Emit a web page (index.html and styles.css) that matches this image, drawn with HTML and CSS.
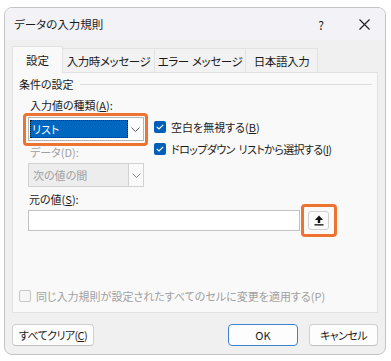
FILE: index.html
```html
<!DOCTYPE html>
<html lang="ja">
<head>
<meta charset="utf-8">
<title>データの入力規則</title>
<link rel="stylesheet" href="styles.css">
</head>
<body>
<div class="window">
  <div class="titlebar">
    <span class="title">データの入力規則</span>
    <span class="help">?</span>
    <span class="close"><svg width="11" height="11" viewBox="0 0 11 11"><path d="M0.5 0.5 L10.5 10.5 M10.5 0.5 L0.5 10.5" stroke="#1b1b1b" stroke-width="1.1" fill="none"/></svg></span>
  </div>
  <div class="body">
    <div class="tabs">
      <div class="tab active t1">設定</div>
      <div class="tab t2">入力時メッセージ</div>
      <div class="tab t3">エラー メッセージ</div>
      <div class="tab t4">日本語入力</div>
    </div>
    <div class="panel">
      <div class="legend"><span>条件の設定</span><span class="rule"></span></div>
      <div class="form">
        <div class="lbl l1">入力値の種類(<u>A</u>):</div>
        <div class="hl combo-wrap">
          <div class="combo">
            <span class="value"><span class="sel">リスト</span></span>
            <span class="drop"><svg width="9" height="5" viewBox="0 0 9 5"><polyline points="0.5,0.5 4.5,4.5 8.5,0.5" fill="none" stroke="#5a5a5a" stroke-width="1"/></svg></span>
          </div>
        </div>
        <div class="checks">
          <div class="check"><span class="box on"><svg width="8" height="6" viewBox="0 0 8 6"><polyline points="0.8,3 3,5 7.2,0.8" fill="none" stroke="#fff" stroke-width="1.2"/></svg></span><span>空白を無視する(<u>B</u>)</span></div>
          <div class="check"><span class="box on"><svg width="8" height="6" viewBox="0 0 8 6"><polyline points="0.8,3 3,5 7.2,0.8" fill="none" stroke="#fff" stroke-width="1.2"/></svg></span><span class="kana">ドロップダウン リストから選択する(<u>I</u>)</span></div>
        </div>
        <div class="lbl l2 disabled">データ(D):</div>
        <div class="combo c2 disabled">
          <span class="value">次の値の間</span>
          <span class="drop"><svg width="9" height="5" viewBox="0 0 9 5"><polyline points="0.5,0.5 4.5,4.5 8.5,0.5" fill="none" stroke="#8a8a8a" stroke-width="1"/></svg></span>
        </div>
      </div>
      <div class="lbl src">元の値(<u>S</u>):</div>
      <div class="src-row">
        <div class="input"></div>
        <div class="hl btn-wrap">
          <div class="ref"><svg width="10" height="11" viewBox="0 0 10 11"><path d="M5 0.5 L9 5 H6.2 V8 H3.8 V5 H1 Z" fill="#111"/><rect x="0.5" y="9.2" width="9" height="1.3" fill="#111"/></svg></div>
        </div>
      </div>
      <div class="apply"><span class="box off"></span><span>同じ入力規則が設定されたすべてのセルに変更を適用する(P)</span></div>
    </div>
    <div class="buttons">
      <div class="btn clear"><span class="kana">すべてクリア(<u>C</u>)</span></div>
      <div class="btn ok">OK</div>
      <div class="btn cancel"><span class="kana">キャンセル</span></div>
    </div>
  </div>
</div>
</body>
</html>
```
FILE: styles.css
```css
* { box-sizing: border-box; }
html, body { margin: 0; padding: 0; background: #ffffff; }
body {
  font-family: "Noto Sans CJK JP", "Noto Sans", sans-serif;
  font-feature-settings: "palt";
  font-size: 11px;
  color: #1b1b1b;
  white-space: nowrap;
}
u { text-decoration-thickness: 1px; text-underline-offset: 1px; }
.kana { letter-spacing: -0.6px; word-spacing: 2px; }

.window {
  margin: 7px 0 0 4px;
  width: 382px;
  height: 348px;
  border: 1px solid #c4c4c4;
  border-radius: 8px;
  background: #f0f0f0;
  overflow: hidden;
  display: flex;
  flex-direction: column;
}

.titlebar {
  height: 32px;
  flex: none;
  background: #f3f3f7;
  display: flex;
  align-items: center;
  padding: 0 3px 0 9px;
}
.title { font-size: 11.5px; }
.help { margin-left: auto; width: 20px; text-align: center; font-size: 12px; }
.close { width: 36px; margin-left: 15px; display: flex; justify-content: center; }

.body { padding: 6px 7px 0 7px; display: flex; flex-direction: column; }

.tabs { display: flex; align-items: flex-end; height: 26px; font-size: 11.5px; }
.tab {
  height: 24px;
  border: 1px solid #e2e2e2;
  border-bottom: none;
  border-left: none;
  background: #f2f2f2;
  display: flex;
  align-items: center;
  justify-content: center;
  letter-spacing: -0.4px;
  word-spacing: 1px;
}
.tab.active {
  height: 27px;
  margin-bottom: -1px;
  border-left: 1px solid #e2e2e2;
  background: #f9f9f9;
  position: relative;
  z-index: 1;
  border-radius: 2px 2px 0 0;
  letter-spacing: 0;
}
.t1 { width: 51px; }
.t2 { width: 92px; }
.t3 { width: 91px; }
.t4 { width: 72px; }

.panel {
  height: 241px;
  border: 1px solid #e2e2e2;
  background: #f9f9f9;
  display: flex;
  flex-direction: column;
}

.legend {
  margin: 3px 5px 0 6px;
  height: 16px;
  line-height: 16px;
  display: flex;
  align-items: center;
}
.legend .rule { flex: 1; height: 1px; background: #dcdcdc; margin-left: 6px; }

.form {
  margin: 6px 0 0 10px;
  display: grid;
  grid-template-columns: 125px 1fr;
  column-gap: 6px;
}
.lbl { line-height: 16px; padding-left: 7px; }
.l1 { grid-column: 1; grid-row: 1; line-height: 15px; height: 15px; }
.disabled { color: #a0a0a0; }
.l2 { grid-column: 1; grid-row: 3; margin-top: -2px; }

.hl { border: 3px solid #ec7430; border-radius: 4px; }
.combo-wrap { grid-column: 1; grid-row: 2; padding: 1px 1px 2px 2px; }

.combo {
  width: 116px;
  height: 24px;
  border: 1px solid #b5b5b5;
  background: #ffffff;
  display: flex;
}
.combo .value { flex: 1; padding: 2px 0 2px 1px; display: flex; }
.combo .sel {
  flex: 1;
  background: #0067c0;
  color: #ffffff;
  padding-left: 2px;
  line-height: 18px;
  outline: 1px dotted #1a1a1a;
  outline-offset: -1px;
}
.combo .drop {
  width: 15px;
  display: flex;
  align-items: center;
  justify-content: center;
  background: #ffffff;
}
.c2 {
  grid-column: 1;
  grid-row: 4;
  margin: 3px 0 0 5px;
  background: #ededed;
  border-color: #d2d2d2;
}
.c2 .value { padding: 0 0 0 4px; line-height: 22px; }
.c2 .drop { border-left: 1px solid #d2d2d2; background: #fafafa; }

.checks {
  grid-column: 2;
  grid-row: 2 / 4;
  padding-top: 6px;
  display: flex;
  flex-direction: column;
  gap: 6px;
}
.check, .apply { display: flex; align-items: center; gap: 5px; line-height: 16px; }
.box {
  width: 12px;
  height: 12px;
  border-radius: 2px;
  display: flex;
  align-items: center;
  justify-content: center;
  flex: none;
}
.box.on { background: #005fb8; }
.box.off { border: 1px solid #c6c6c6; background: #f6f6f6; }

.src { margin: 4px 0 0 10px; padding-left: 6px; }
.src-row {
  margin: -3px 0 0 15px;
  display: flex;
  align-items: center;
}
.input {
  width: 272px;
  height: 21px;
  border: 1px solid #c2c2c2;
  background: #ffffff;
}
.btn-wrap { margin-left: 1px; padding: 4px 5px 4px 4px; }
.ref {
  width: 21px;
  height: 19px;
  border: 1px solid #d0d0d0;
  border-radius: 3px;
  background: #fbfbfb;
  display: flex;
  align-items: center;
  justify-content: center;
}

.apply { margin: auto 0 0 6px; padding-bottom: 8px; color: #a0a0a0; gap: 5px; }

.buttons { margin-top: 11px; display: flex; height: 22px; }
.btn {
  height: 22px;
  border: 1px solid #d0d0d0;
  border-bottom-color: #c0c0c0;
  border-radius: 4px;
  background: #fdfdfd;
  display: flex;
  align-items: center;
  justify-content: center;
}
.clear { width: 82px; }
.ok { width: 70px; margin-left: auto; border-color: #3d82cf; }
.cancel { width: 69px; margin-left: 11px; }
```
